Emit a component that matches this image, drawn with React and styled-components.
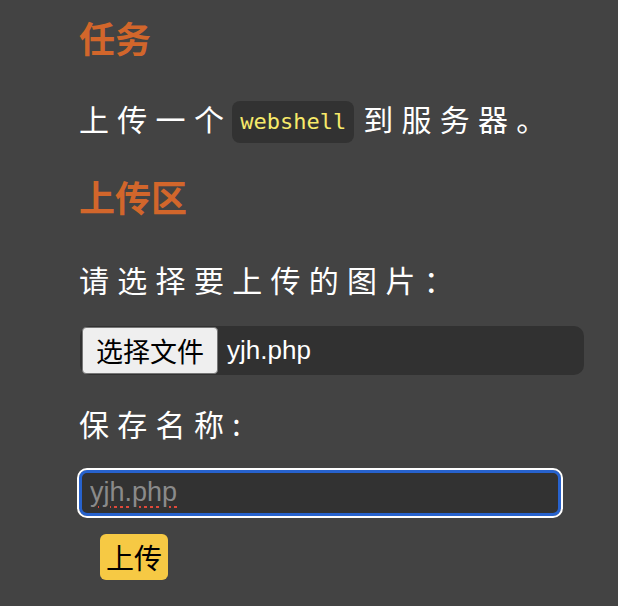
import React from "react";
import styled, { createGlobalStyle } from "styled-components";

const Global = createGlobalStyle`
  html, body { margin: 0; padding: 0; background: #434343; }
  body { font-family: "Liberation Sans", "Noto Sans CJK SC", sans-serif; color: #fff; }
  * { box-sizing: border-box; }
`;

const Page = styled.main`
  width: 618px;
  height: 606px;
  padding: 16px 0 0 80px;
  background: #434343;
  overflow: hidden;
`;

const Heading = styled.h2`
  margin: ${(p) => p.$mt || 0}px 0 0 -1px;
  font-family: "Noto Sans CJK SC", sans-serif;
  font-weight: 700;
  font-size: 36px;
  line-height: 42px;
  letter-spacing: 0;
  color: #d2662b;
`;

const Para = styled.p`
  margin: ${(p) => p.$mt || 0}px 0 0 -1px;
  font-family: "Noto Sans CJK SC", sans-serif;
  font-size: 30px;
  line-height: ${(p) => p.$lh || 36}px;
  letter-spacing: 8.3px;
  color: #fff;
  white-space: nowrap;
`;

const Code = styled.code`
  display: inline-block;
  vertical-align: middle;
  margin: -2px 9px 0 0;
  padding: 6px 8px;
  line-height: 30px;
  font-family: "DejaVu Sans Mono", monospace;
  font-size: 22px;
  letter-spacing: 0;
  color: #f7ea6a;
  background: #323232;
  border-radius: 8px;
`;

const FileBox = styled.div`
  margin-top: ${(p) => p.$mt || 0}px;
  width: 504px;
  height: 49px;
  padding: 1px 2px;
  display: flex;
  align-items: center;
  gap: 9px;
  background: #313131;
  border-radius: 10px;
`;

const FileButton = styled.button`
  height: 47px;
  padding: 0 13px;
  font-family: "Noto Sans CJK SC", sans-serif;
  font-size: 27px;
  color: #000;
  background: #efefef;
  border: 1px solid #767676;
  border-radius: 4px;
`;

const FileName = styled.span`
  font-family: "Liberation Sans", sans-serif;
  font-size: 26px;
  color: #fff;
`;

const TextInput = styled.input`
  display: block;
  margin: ${(p) => p.$mt || 0}px 0 0 -1px;
  width: 482px;
  height: 46px;
  padding: 0 0 0 8px;
  font-family: "Liberation Sans", sans-serif;
  font-size: 27px;
  color: #8a8a8a;
  background: #323232;
  border: 3px solid #2762cd;
  border-radius: 8px;
  outline: 2px solid #fff;
  outline-offset: 0;
  text-decoration-line: underline;
  text-decoration-style: dotted;
  text-decoration-color: #e0493a;
  text-decoration-thickness: 3px;
  text-underline-offset: 5px;
`;

const SubmitButton = styled.button`
  display: block;
  margin: ${(p) => p.$mt || 0}px 0 0 20px;
  height: 46px;
  padding: 0 6px;
  font-family: "Noto Sans CJK SC", sans-serif;
  font-size: 28px;
  color: #000;
  background: #f6c944;
  border: none;
  border-radius: 6px;
`;

export default function App() {
  return (
    <Page>
      <Global />
      <Heading>任务</Heading>
      <Para $mt={37} $lh={46}>
        上传一个<Code>webshell</Code>到服务器。
      </Para>
      <Heading $mt={32}>上传区</Heading>
      <Para $mt={44}>请选择要上传的图片：</Para>
      <FileBox $mt={29}>
        <FileButton type="button">选择文件</FileButton>
        <FileName>yjh.php</FileName>
      </FileBox>
      <Para $mt={30}>保存名称:</Para>
      <TextInput $mt={29} defaultValue="yjh.php" spellCheck={false} />
      <SubmitButton $mt={18} type="button">上传</SubmitButton>
    </Page>
  );
}
